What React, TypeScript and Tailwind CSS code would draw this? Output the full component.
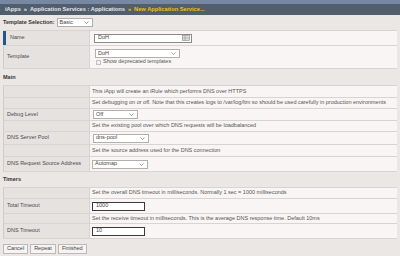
import type { ReactNode } from 'react';

function Chevron() {
  return (
    <svg width="5" height="3" viewBox="0 0 5 3" className="shrink-0">
      <polyline points="0.5,0.5 2.5,2.5 4.5,0.5" fill="none" stroke="#777" strokeWidth="0.7" />
    </svg>
  );
}

function Select({ value, className }: { value: string; className: string }) {
  return (
    <div className={`flex h-[9px] items-center justify-between border border-[#b3afad] bg-white pl-[2px] pr-[3px] text-[#444] ${className}`}>
      <span>{value}</span>
      <Chevron />
    </div>
  );
}

function TextInput({ value }: { value: string }) {
  return (
    <div className="flex h-[9px] w-[53px] items-center border border-[#3a3a3a] bg-white pl-[3px] text-[#444]">
      {value}
    </div>
  );
}

function Row({
  label,
  h,
  children,
  marker,
  pad = 'pl-[2px]',
}: {
  label?: string;
  h: string;
  children?: ReactNode;
  marker?: boolean;
  pad?: string;
}) {
  return (
    <div className={`flex border-b border-[#d8d4d2] ${h}`}>
      <div
        className={`flex w-[87px] shrink-0 items-center border-r border-[#d8d4d2] bg-[#e6e2e0] text-[#4a4a4a] ${
          marker ? 'border-l-[3px] border-l-[#24568a] pl-[4px]' : 'border-l border-l-[#cfcbc9] pl-[3px]'
        }`}
      >
        {label}
      </div>
      <div className={`flex flex-1 items-center bg-[#f8f5f4] text-[#555] ${pad}`}>{children}</div>
    </div>
  );
}

function Section({ title, h }: { title: string; h: string }) {
  return (
    <div className={`flex items-center pl-[3px] pt-[1px] font-bold text-[#333] ${h}`}>{title}</div>
  );
}

export default function App() {
  return (
    <div className="h-[256px] w-[400px] overflow-hidden bg-[#ebe7e5] font-['Liberation_Sans',Arial,sans-serif] text-[5.5px] leading-none">
      {/* Breadcrumb bar */}
      <div className="flex h-[15px] items-center border-t-[4px] border-[#7789a2] bg-[#535e6d] pl-[5px] text-[5.7px] font-bold text-[#e4e6ea]">
        <span>iApps</span>
        <span className="px-[3px]">»</span>
        <span>Application Services : Applications</span>
        <span className="px-[3px] text-[#f2c200]">»</span>
        <span className="text-[#f2c200]">New Application Service...</span>
      </div>

      {/* Template selection */}
      <div className="flex h-[15px] items-center gap-[2px] pl-[3px]">
        <span className="font-bold text-[#333]">Template Selection:</span>
        <Select value="Basic" className="w-[36px]" />
      </div>

      <div className="mx-[3px] border-t border-[#d8d4d2]">
        <Row label="Name" h="h-[15px]" marker pad="pl-[4px]">
          <div className="flex h-[9px] w-[98px] items-center justify-between border border-[#8d8987] bg-white pl-[3px] pr-[1px] text-[#444]">
            <span>DoH</span>
            <svg width="8" height="6" viewBox="0 0 8 6">
              <rect x="0.5" y="0.5" width="7" height="5" fill="#eee" stroke="#888" strokeWidth="0.6" />
              <line x1="0.5" y1="2.2" x2="7.5" y2="2.2" stroke="#888" strokeWidth="0.5" />
              <line x1="0.5" y1="3.8" x2="7.5" y2="3.8" stroke="#888" strokeWidth="0.5" />
              <line x1="3" y1="0.5" x2="3" y2="5.5" stroke="#888" strokeWidth="0.5" />
            </svg>
          </div>
        </Row>
        <Row label="Template" h="h-[23px]" pad="pl-[5px]">
          <div className="flex flex-col gap-[1px]">
            <Select value="DoH" className="w-[85px]" />
            <div className="flex items-center gap-[2px] pl-[1px]">
              <div className="h-[5px] w-[5px] border border-[#c4c0be] bg-[#f2f0ef]" />
              <span>Show deprecated templates</span>
            </div>
          </div>
        </Row>
      </div>

      <Section title="Main" h="h-[16px]" />
      <div className="mx-[3px] border-t border-[#d8d4d2]">
        <Row h="h-[12px]">This iApp will create an iRule which performs DNS over HTTPS</Row>
        <Row h="h-[11px]">
          Set debugging on or off. Note that this creates logs to /var/log/ltm so should be used carefully in production environments
        </Row>
        <Row label="Debug Level" h="h-[12px]" pad="pl-[3px]">
          <Select value="Off" className="w-[45px]" />
        </Row>
        <Row h="h-[11px]">Set the existing pool over which DNS requests will be loadbalanced</Row>
        <Row label="DNS Server Pool" h="h-[13px]" pad="pl-[3px]">
          <Select value="dns-pool" className="w-[56px]" />
        </Row>
        <Row h="h-[12px]">Set the source address used for the DNS connection</Row>
        <Row label="DNS Request Source Address" h="h-[15px]" pad="pl-[2px]">
          <Select value="Automap" className="w-[56px]" />
        </Row>
      </div>

      <Section title="Timers" h="h-[15px]" />
      <div className="mx-[3px] border-t border-[#d8d4d2]">
        <Row h="h-[11px]">Set the overall DNS timeout in milliseconds. Normally 1 sec = 1000 milliseconds</Row>
        <Row label="Total Timeout" h="h-[15px]" pad="pl-[2px]">
          <TextInput value="1000" />
        </Row>
        <Row h="h-[10px]">
          Set the receive timeout in milliseconds. This is the average DNS response time. Default 10ms
        </Row>
        <Row label="DNS Timeout" h="h-[15px]" pad="pl-[2px]">
          <TextInput value="10" />
        </Row>
      </div>

      {/* Action buttons */}
      <div className="flex gap-[2px] pl-[3px] pt-[5px]">
        {['Cancel', 'Repeat', 'Finished'].map((b) => (
          <button
            key={b}
            className="flex h-[10px] items-center border border-[#bdb9b7] bg-[#f6f4f3] px-[3px] text-[#444]"
          >
            {b}
          </button>
        ))}
      </div>
    </div>
  );
}
